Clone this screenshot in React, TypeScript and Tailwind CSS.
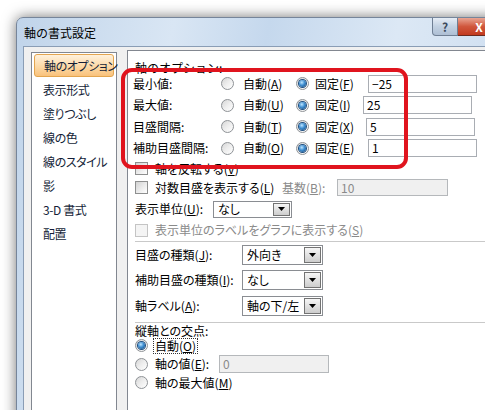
import React from "react";

const Radio = ({ checked = false }: { checked?: boolean }) => (
  <span className="flex h-[13px] w-[13px] shrink-0 items-center justify-center rounded-full border border-[#8e9296] bg-[linear-gradient(135deg,#d6d6d6_0%,#eeeeee_50%,#ffffff_100%)]">
    {checked && (
      <span className="h-[7px] w-[7px] rounded-full bg-[radial-gradient(circle_at_40%_35%,#bfe6ff_0%,#3f8fd2_45%,#0d3f73_100%)] shadow-[0_0_0_1px_#1e4e80]" />
    )}
  </span>
);

const Checkbox = ({ disabled = false }: { disabled?: boolean }) => (
  <span
    className={
      disabled
        ? "h-[13px] w-[13px] shrink-0 border border-[#c4c4c4] bg-[#f4f4f4]"
        : "h-[13px] w-[13px] shrink-0 border border-[#8e8f8f] bg-[linear-gradient(135deg,#d2d2d2_0%,#ececec_55%,#ffffff_100%)]"
    }
  />
);

const Input = ({ value, className, disabled = false }: { value: string; className: string; disabled?: boolean }) => (
  <div
    className={`flex items-center border pl-[3px] ${className} ${
      disabled ? "border-[#b5b8bb] bg-[#f0f0f0] text-[#8a8a8a]" : "border-[#a9adb3] bg-white text-black"
    }`}
  >
    {value}
  </div>
);

const Select = ({ value, className }: { value: string; className: string }) => (
  <div className={`flex items-stretch border border-[#8a8d92] bg-white ${className}`}>
    <span className="flex flex-1 items-center pl-[4px]">{value}</span>
    <span className="m-[1px] flex w-[17px] items-center justify-center border border-[#737373] bg-[linear-gradient(#f6f6f6,#cdcdcd)]">
      <svg width="7" height="4" viewBox="0 0 7 4">
        <path d="M0 0H7L3.5 4Z" fill="#000" />
      </svg>
    </span>
  </div>
);

const navItems = ["軸のオプション", "表示形式", "塗りつぶし", "線の色", "線のスタイル", "影", "3-D 書式", "配置"];

const scaleRows = [
  { label: "最小値:", auto: "A", fixed: "F", value: "−25", box: "ml-[8px]" },
  { label: "最大値:", auto: "U", fixed: "I", value: "25", box: "ml-[3px]" },
  { label: "目盛間隔:", auto: "T", fixed: "X", value: "5", box: "ml-[6px]" },
  { label: "補助目盛間隔:", auto: "O", fixed: "E", value: "1", box: "ml-[8px]" },
];

const selectRows = [
  { label: "目盛の種類", key: "J", value: "外向き" },
  { label: "補助目盛の種類", key: "I", value: "なし" },
  { label: "軸ラベル", key: "A", value: "軸の下/左" },
];

export default function App() {
  return (
    <div className="h-[410px] w-[485px] overflow-hidden bg-white pl-[16px] pt-[17px] font-['Noto_Sans_CJK_JP','Noto_Sans',sans-serif] text-[12px] leading-[14px] text-black">
      <div className="flex h-[420px] w-[491px] flex-col rounded-t-[7px] border border-[#76859a] bg-[linear-gradient(100deg,#c0d4ea_0%,#d9e6f4_28%,#c5d8ed_45%,#dce8f5_68%,#c8daee_100%)] shadow-[0_0_14px_rgba(0,0,0,0.55)]">
        {/* title bar */}
        <div className="flex h-[28px] shrink-0 items-start">
          <span className="mt-[8px] pl-[7px] text-[12px] leading-[14px] text-black">軸の書式設定</span>
          <div className="ml-auto mr-[5px] flex">
            <span className="flex h-[18px] w-[26px] items-center justify-center rounded-bl-[4px] border border-t-0 border-[#6f7f94] bg-[linear-gradient(#e6edf6,#c2d1e2_50%,#aebfd4)] text-[12px] font-bold text-[#3b4a5c]">
              ?
            </span>
            <span className="flex h-[18px] w-[43px] items-center justify-center rounded-br-[4px] border border-l-0 border-t-0 border-[#6b2a1e] bg-[linear-gradient(#e9a593,#d0573d_50%,#c23a1f)] text-[12px] font-bold text-white">
              X
            </span>
          </div>
        </div>

        {/* body */}
        <div className="flex flex-1 pl-[6px]">
          <div className="flex flex-1 items-start border-l border-t border-[#8a9db5] bg-[#f0f0f0] pl-[7px] [font-feature-settings:'palt']">
            {/* left nav */}
            <div className="mt-[5px] h-[380px] w-[86px] shrink-0 border border-[#828790] bg-white pt-[1px]">
              {navItems.map((item, i) => (
                <div key={item} className="flex h-[24px] items-start px-[2px]">
                  <div
                    className={`flex h-[23px] w-full items-center whitespace-nowrap pl-[9px] tracking-[-0.4px] text-[#141e38] ${
                      i === 0
                        ? "rounded-[3px] border border-[#e3a54f] bg-[linear-gradient(#fff1dc,#fcd9a6_55%,#f9c27c)]"
                        : ""
                    }`}
                  >
                    {item}
                  </div>
                </div>
              ))}
            </div>

            {/* right panel */}
            <div className="relative ml-[10px] mt-[3px] h-[380px] flex-1 border border-[#828790] bg-white pl-[7px]">
              <div className="flex h-[22px] items-end [font-feature-settings:normal]">
                <span className="translate-y-[2px]">軸のオプション:</span>
              </div>

              <div className="-ml-[2px]">
                {scaleRows.map((r) => (
                  <div key={r.label} className="flex h-[21.5px] items-center">
                    <span className="w-[88px]">{r.label}</span>
                    <Radio />
                    <span className="ml-[9px] w-[53px]">
                      自動(<u>{r.auto}</u>)
                    </span>
                    <Radio checked />
                    <span className="ml-[6px] w-[45px]">
                      固定(<u>{r.fixed}</u>)
                    </span>
                    <Input value={r.value} className={`h-[18px] w-[109px] ${r.box}`} />
                  </div>
                ))}
              </div>

              <div className="flex h-[19px] items-center">
                <Checkbox />
                <span className="ml-[7px]">
                  軸を反転する(<u>V</u>)
                </span>
              </div>
              <div className="flex h-[19px] items-center">
                <Checkbox />
                <span className="ml-[7px] w-[127px]">
                  対数目盛を表示する(<u>L</u>)
                </span>
                <span className="w-[55px] text-[#8a8a8a]">
                  基数(<u>B</u>):
                </span>
                <Input value="10" disabled className="h-[17px] w-[111px]" />
              </div>
              <div className="flex h-[24px] items-center">
                <span className="w-[78px]">
                  表示単位(<u>U</u>):
                </span>
                <Select value="なし" className="h-[17px] w-[79px]" />
              </div>
              <div className="flex h-[18px] items-center text-[#8a8a8a]">
                <Checkbox disabled />
                <span className="ml-[7px]">
                  表示単位のラベルをグラフに表示する(<u>S</u>)
                </span>
              </div>
              <div className="mt-[2px] h-px bg-[#c9c9c9]" />

              {selectRows.map((r) => (
                <div key={r.label} className="flex h-[25.5px] items-center">
                  <span className="w-[107px]">
                    {r.label}(<u>{r.key}</u>):
                  </span>
                  <Select value={r.value} className="h-[20px] w-[81px]" />
                </div>
              ))}
              <div className="mt-[3px] h-px bg-[#c9c9c9]" />

              <div className="flex h-[14px] items-center pt-[2px]">縦軸との交点:</div>
              <div className="flex h-[18.5px] items-center">
                <Radio checked />
                <span className="ml-[6px] px-[1px] outline-1 outline-dotted outline-[#333]">
                  自動(<u>O</u>)
                </span>
              </div>
              <div className="flex h-[18.5px] items-center">
                <Radio />
                <span className="ml-[7px] w-[64px]">
                  軸の値(<u>E</u>):
                </span>
                <Input value="0" disabled className="h-[18px] w-[110px]" />
              </div>
              <div className="flex h-[18.5px] items-center">
                <Radio />
                <span className="ml-[7px]">
                  軸の最大値(<u>M</u>)
                </span>
              </div>

              {/* red highlight drawn over the scale rows */}
              <div className="pointer-events-none absolute left-[-7px] top-[17px] h-[101px] w-[287px] rounded-[11px] border-[4px] border-[#e0141e]" />
            </div>
          </div>
        </div>
      </div>
    </div>
  );
}
